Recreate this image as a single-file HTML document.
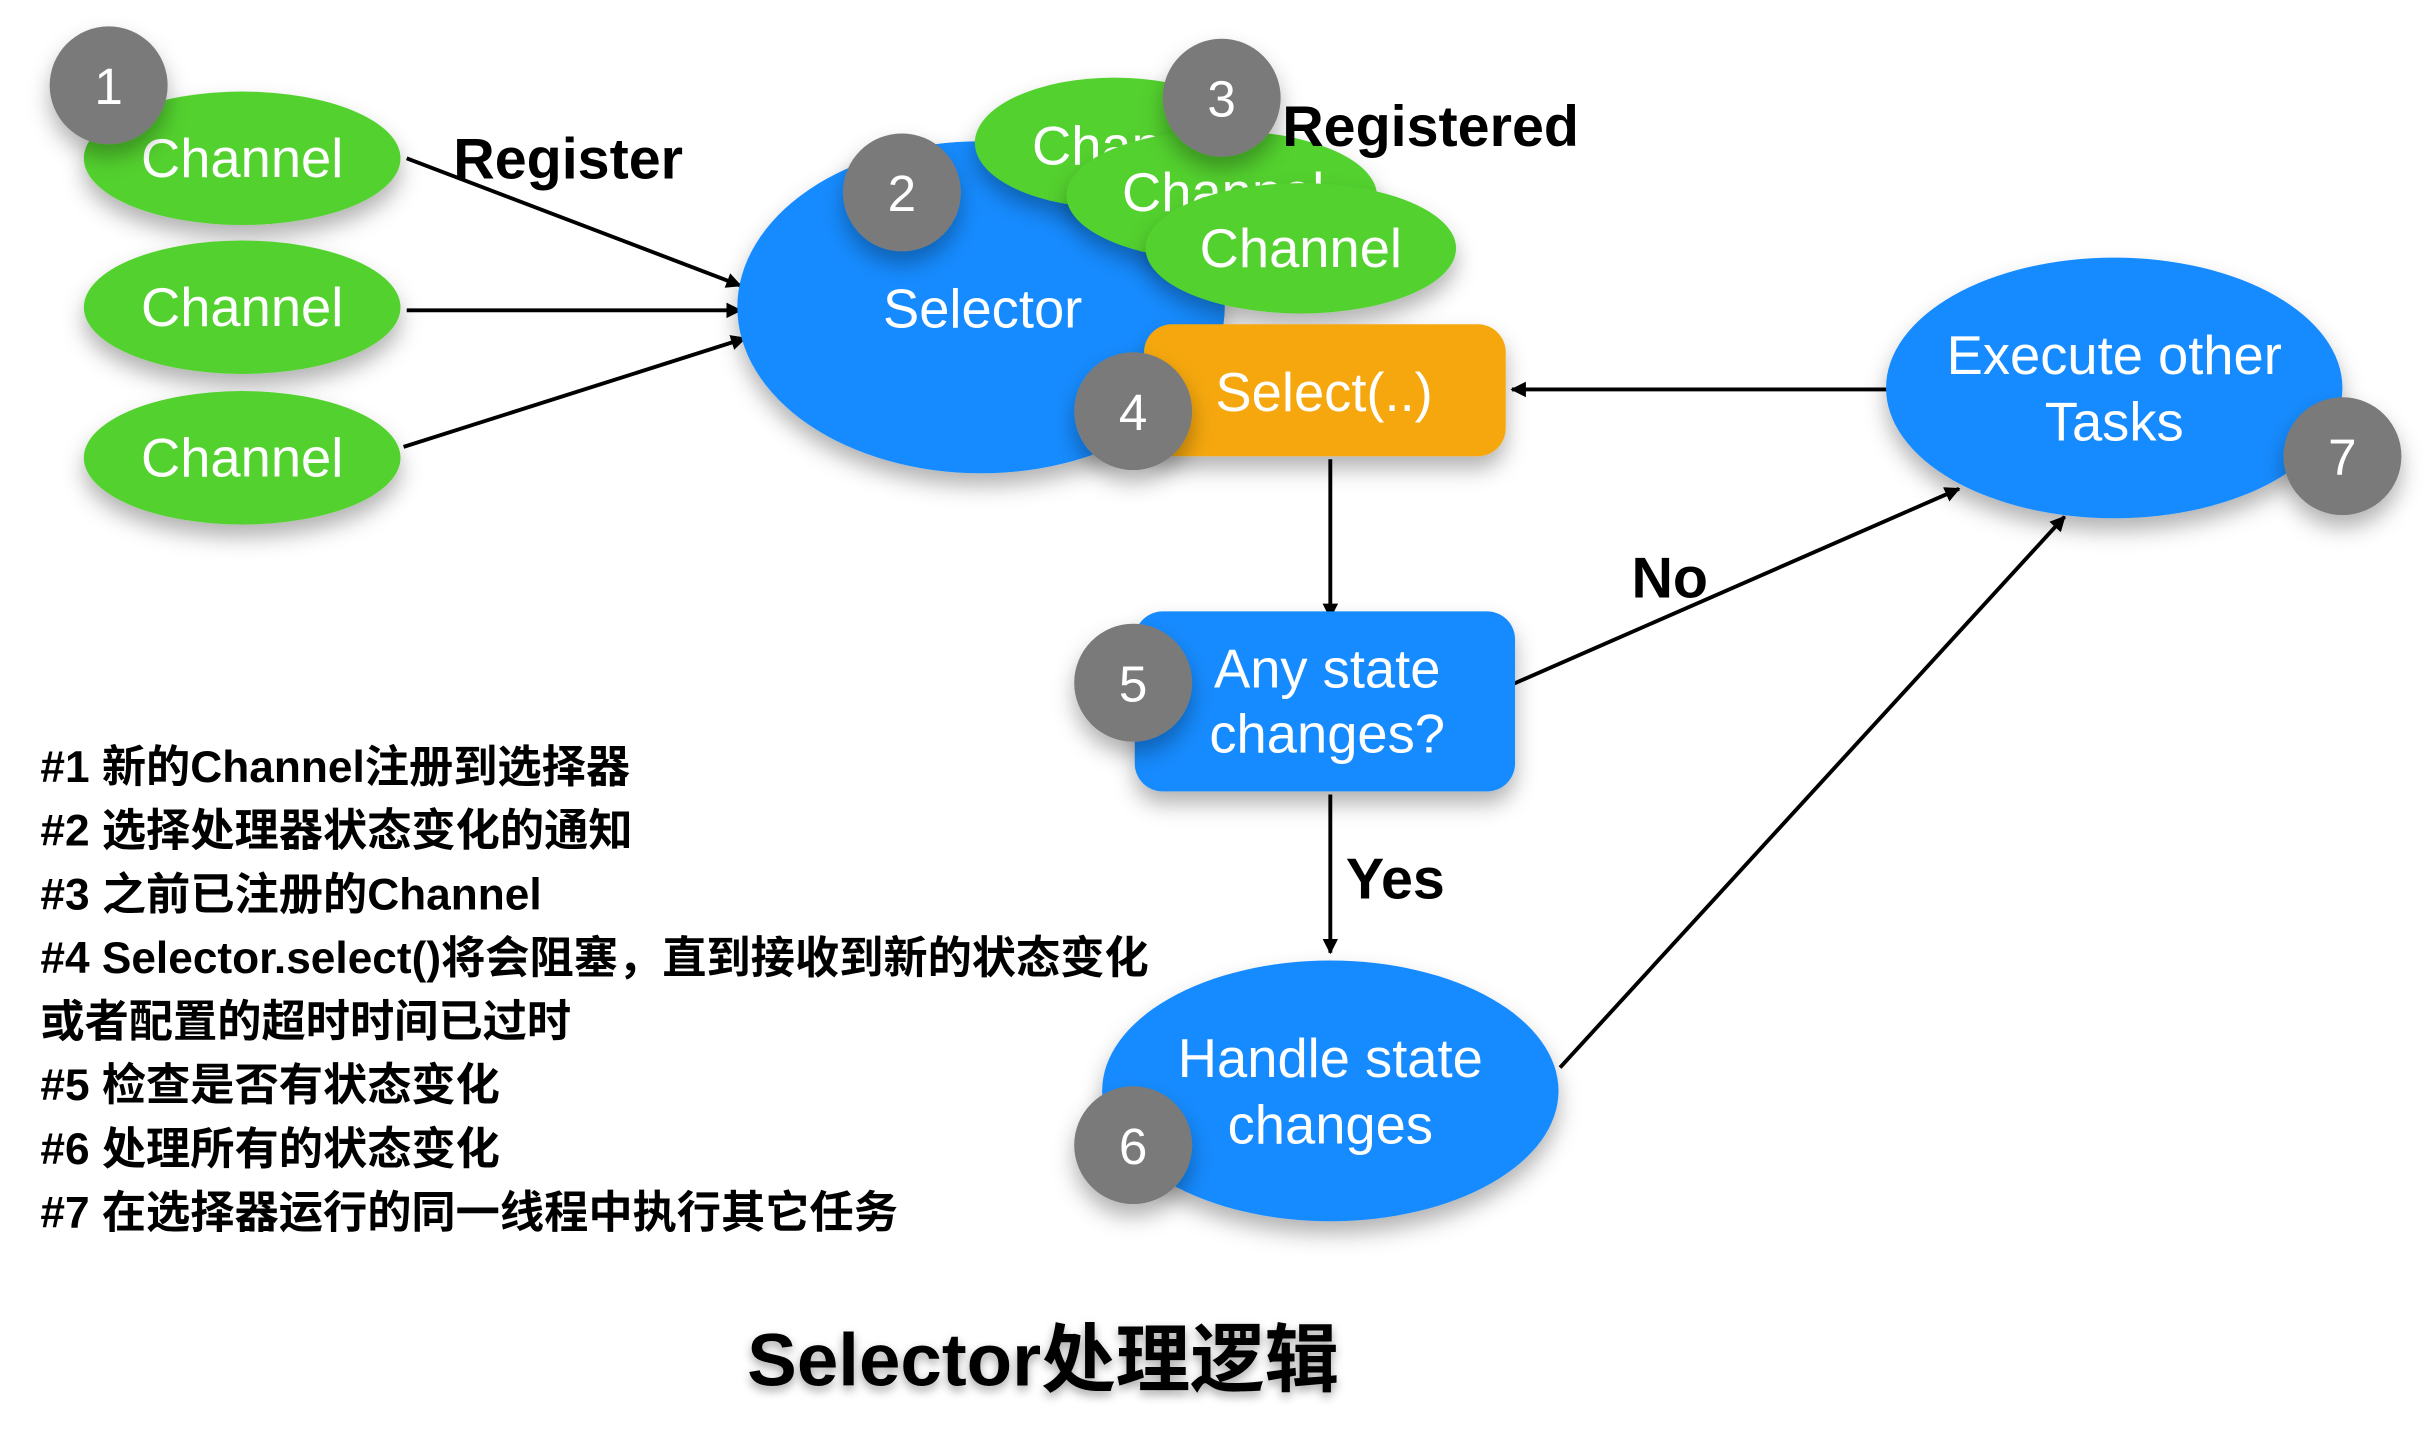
<!DOCTYPE html>
<html><head><meta charset="utf-8"><style>
html,body{margin:0;padding:0;background:#fff;width:2434px;height:1440px;overflow:hidden}
svg{display:block}
text{font-family:"Liberation Sans","Noto Sans CJK SC",sans-serif}
</style></head><body>
<svg width="2434" height="1440" viewBox="0 0 1568 928" preserveAspectRatio="none">
<defs>
<filter id="sh" x="-30%" y="-30%" width="160%" height="170%">
<feDropShadow dx="0" dy="8" stdDeviation="7" flood-color="#000" flood-opacity="0.3"/>
</filter>
<filter id="ts" x="-10%" y="-30%" width="120%" height="170%">
<feDropShadow dx="0" dy="3" stdDeviation="3" flood-color="#000" flood-opacity="0.35"/>
</filter>
<marker id="ar" markerWidth="10" markerHeight="10" refX="9" refY="5" orient="auto" markerUnits="userSpaceOnUse">
<path d="M0,0 L10,5 L0,10 z" fill="#000"/>
</marker>
</defs>
<g stroke="#000" stroke-width="2.5" fill="none" marker-end="url(#ar)">
<line x1="262" y1="102" x2="477" y2="184"/>
<line x1="262" y1="200" x2="477" y2="200"/>
<line x1="260" y1="288" x2="480" y2="218"/>
<line x1="1218" y1="251" x2="974" y2="251"/>
<line x1="857" y1="296" x2="857" y2="398"/>
<line x1="972" y1="442" x2="1262" y2="315"/>
<line x1="857" y1="512" x2="857" y2="614"/>
<line x1="1005" y1="688" x2="1330" y2="333"/>
</g>
<g fill="#fff" font-size="35" text-anchor="middle">
<ellipse cx="156" cy="102" rx="102" ry="43" fill="#52d12f" filter="url(#sh)"/>
<ellipse cx="156" cy="198" rx="102" ry="43" fill="#52d12f" filter="url(#sh)"/>
<ellipse cx="156" cy="295" rx="102" ry="43" fill="#52d12f" filter="url(#sh)"/>
<text x="156" y="114">Channel</text>
<text x="156" y="210">Channel</text>
<text x="156" y="307">Channel</text>
<ellipse cx="632" cy="198" rx="157" ry="107" fill="#168bff" filter="url(#sh)"/>
<text x="633" y="211">Selector</text>
<ellipse cx="718" cy="92" rx="90" ry="42" fill="#52d12f" filter="url(#sh)"/>
<text x="730" y="106">Channel</text>
<ellipse cx="787" cy="126" rx="100" ry="42" fill="#52d12f" filter="url(#sh)"/>
<text x="788" y="136">Channel</text>
<ellipse cx="838" cy="160" rx="100" ry="42" fill="#52d12f" filter="url(#sh)"/>
<text x="838" y="172">Channel</text>
<rect x="737" y="209" width="233" height="85" rx="18" fill="#f5a70f" filter="url(#sh)"/>
<text x="853" y="265">Select(..)</text>
<ellipse cx="1362" cy="250" rx="147" ry="84" fill="#168bff" filter="url(#sh)"/>
<text x="1362" y="241">Execute other</text>
<text x="1362" y="284">Tasks</text>
<rect x="731" y="394" width="245" height="116" rx="18" fill="#168bff" filter="url(#sh)"/>
<text x="855" y="443">Any state</text>
<text x="855" y="485">changes?</text>
<ellipse cx="857" cy="703" rx="147" ry="84" fill="#168bff" filter="url(#sh)"/>
<text x="857" y="694">Handle state</text>
<text x="857" y="737">changes</text>
</g>
<g filter="url(#sh)" fill="#7a7a7a">
<circle cx="70" cy="55" r="38"/>
<circle cx="581" cy="124" r="38"/>
<circle cx="787" cy="63" r="38"/>
<circle cx="730" cy="265" r="38"/>
<circle cx="730" cy="440" r="38"/>
<circle cx="730" cy="738" r="38"/>
<circle cx="1509" cy="294" r="38"/>
</g>
<g fill="#fff" font-size="33" text-anchor="middle">
<text x="70" y="67">1</text><text x="581" y="136">2</text><text x="787" y="75">3</text>
<text x="730" y="277">4</text><text x="730" y="452">5</text><text x="730" y="750">6</text><text x="1509" y="306">7</text>
</g>
<g font-size="37" font-weight="bold" fill="#000">
<text x="292" y="115">Register</text>
<text x="826" y="94">Registered</text>
<text x="1051" y="385">No</text>
<text x="867" y="579">Yes</text>
</g>
<g font-size="28.5" font-weight="bold" fill="#000">
<text x="26" y="504">#1 新的Channel注册到选择器</text>
<text x="26" y="545">#2 选择处理器状态变化的通知</text>
<text x="26" y="586">#3 之前已注册的Channel</text>
<text x="26" y="627">#4 Selector.select()将会阻塞，直到接收到新的状态变化</text>
<text x="26" y="668">或者配置的超时时间已过时</text>
<text x="26" y="709">#5 检查是否有状态变化</text>
<text x="26" y="750">#6 处理所有的状态变化</text>
<text x="26" y="791">#7 在选择器运行的同一线程中执行其它任务</text>
</g>
<text x="672" y="893" font-size="48" font-weight="bold" text-anchor="middle" filter="url(#ts)">Selector处理逻辑</text>
</svg>
</body></html>
